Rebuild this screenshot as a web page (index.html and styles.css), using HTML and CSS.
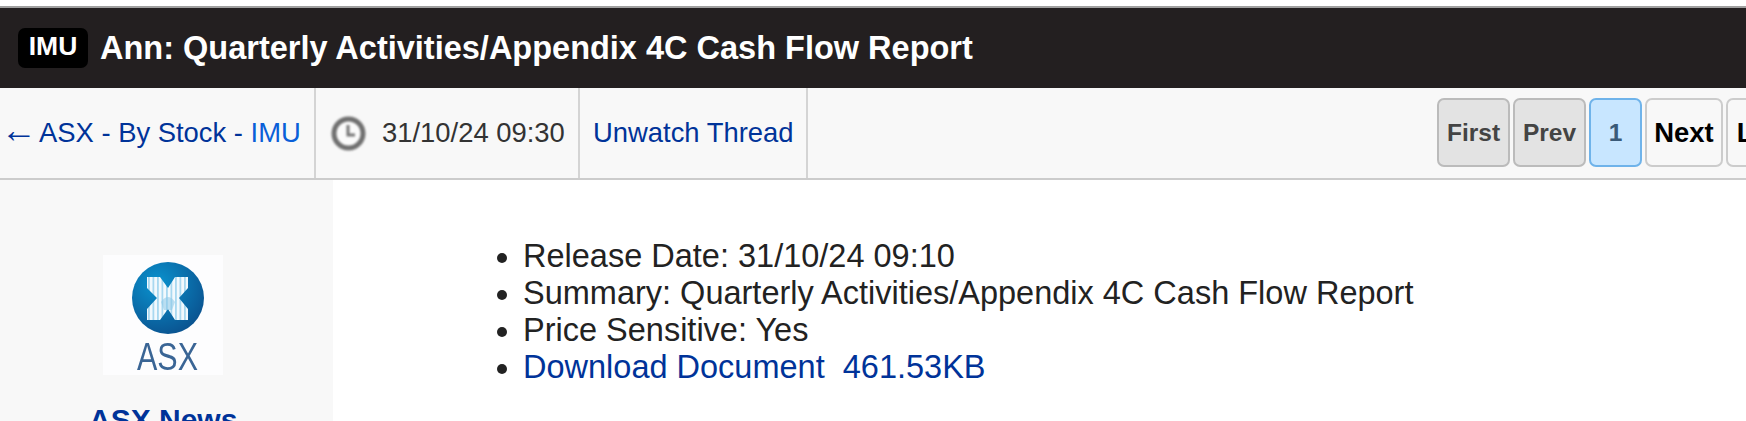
FILE: index.html
```html
<!DOCTYPE html>
<html lang="en">
<head>
<meta charset="utf-8">
<title>Ann: Quarterly Activities/Appendix 4C Cash Flow Report</title>
<link rel="stylesheet" href="styles.css">
</head>
<body>
<header class="title-bar">
  <span class="ticker">IMU</span>
  <h1 class="title">Ann: Quarterly Activities/Appendix 4C Cash Flow Report</h1>
</header>
<nav class="toolbar">
  <div class="cell crumbs"><span><a class="link" href="#"><span class="arrow">←</span>ASX - By Stock - </a><a class="link-bright" href="#">IMU</a></span></div>
  <div class="cell time">
    <svg class="clock" viewBox="0 0 35 35" aria-hidden="true">
      <circle cx="17.5" cy="17.5" r="14.5" fill="#fbfbfb" stroke="#707070" stroke-width="5"/>
      <path d="M17 9v10h7" fill="none" stroke="#767676" stroke-width="3"/>
    </svg>
    <span>31/10/24 09:30</span>
  </div>
  <div class="cell watch"><a class="link" href="#">Unwatch Thread</a></div>
  <div class="pager">
    <a class="page off" href="#">First</a>
    <a class="page off" href="#">Prev</a>
    <a class="page current" href="#">1</a>
    <a class="page on next" href="#">Next</a>
    <a class="page on last" href="#">Last</a>
  </div>
</nav>
<main class="thread">
  <aside class="author">
    <svg class="logo" viewBox="0 0 120 120" role="img" aria-label="ASX">
      <defs>
        <radialGradient id="globe" cx="0.35" cy="0.3" r="0.8">
          <stop offset="0" stop-color="#0a93cf"/>
          <stop offset="1" stop-color="#0a4f8c"/>
        </radialGradient>
        <pattern id="stripes" width="4.5" height="6" patternUnits="userSpaceOnUse">
          <rect width="4.5" height="6" fill="#f2f9fd"/>
          <rect x="0" width="1.8" height="6" fill="#a9d8f0"/>
        </pattern>
      </defs>
      <rect width="120" height="120" fill="#fdfdfe"/>
      <circle cx="65" cy="43" r="36" fill="url(#globe)"/>
      <path d="M44 22h13l8 11 7-11h13v11l-9 10 9 11v11H72l-7-11-8 11H44V54l10-11-10-10z" fill="url(#stripes)"/>
      <path d="M58 47q7-10 14 0l-3 8h-8z" fill="#8cc8e8" opacity="0.55"/>
      <text class="logo-text" x="34" y="115" textLength="61" lengthAdjust="spacingAndGlyphs">ASX</text>
    </svg>
    <a class="author-name" href="#">ASX News</a>
  </aside>
  <section class="post">
    <ul class="facts">
      <li>Release Date: 31/10/24 09:10</li>
      <li>Summary: Quarterly Activities/Appendix 4C Cash Flow Report</li>
      <li>Price Sensitive: Yes</li>
      <li><a class="link" href="#">Download Document&nbsp; 461.53KB</a></li>
    </ul>
  </section>
</main>
</body>
</html>
```
FILE: styles.css
```css
html, body {
  margin: 0;
  height: 100%;
  overflow: hidden;
  background: #fff;
}
body {
  padding-top: 6px;
  box-sizing: border-box;
  font-family: "Liberation Sans", Arial, sans-serif;
  color: #222;
}
a { text-decoration: none; }
.link { color: #039; }
.link-bright { color: #0a5fd8; }

.title-bar {
  display: flex;
  align-items: center;
  gap: 12px;
  height: 80px;
  padding-left: 18px;
  border-top: 2px solid #a0a0a0;
  background: #231f20;
  color: #fff;
}
.ticker {
  width: 70px;
  height: 40px;
  border-radius: 7px;
  background: #000;
  font-size: 26.5px;
  font-weight: 700;
  line-height: 36px;
  text-align: center;
}
.title {
  margin: 0;
  font-size: 32.5px;
  font-weight: 700;
}

.toolbar {
  display: flex;
  align-items: stretch;
  height: 92px;
  box-sizing: border-box;
  border-bottom: 2px solid #ccc;
  background: #f8f8f8;
  font-size: 27.4px;
}
.cell {
  display: flex;
  align-items: center;
  border-right: 2px solid #d4d4d4;
  white-space: nowrap;
}
.crumbs { width: 316px; box-sizing: border-box; padding-left: 1px; }
.arrow { font-size: 36px; line-height: 0; margin-right: 2px; }
.time { width: 264px; box-sizing: border-box; padding-left: 15px; gap: 16px; color: #333; }
.clock { width: 35px; height: 35px; flex: none; filter: blur(0.8px); }
.watch { width: 228px; box-sizing: border-box; padding-left: 13px; }

.pager {
  display: flex;
  align-items: center;
  gap: 3px;
  margin-left: auto;
  margin-right: -58px;
  margin-bottom: 1px;
}
.page {
  display: flex;
  align-items: center;
  justify-content: center;
  height: 69px;
  box-sizing: border-box;
  border: 2px solid #ccc;
  border-radius: 7px;
  font-weight: 700;
  font-size: 24.5px;
}
.off { width: 73px; background: #e3e3e3; border-color: #bbb; color: #444; }
.current { width: 53px; background: #c8e6ff; border-color: #6fb3ea; color: #3a5a78; }
.on { background: #f8f8f8; color: #000; font-size: 27.4px; }
.next { width: 78px; }
.last { width: 78px; }

.thread { display: flex; height: 241px; }
.author {
  flex: none;
  width: 333px;
  box-sizing: border-box;
  display: flex;
  flex-direction: column;
  padding: 75px 0 0 89px;
  background: #f8f8f8;
}
.logo { width: 120px; height: 120px; margin-left: 14px; flex: none; filter: blur(0.6px); }
.logo-text { font-family: "Liberation Sans", Arial, sans-serif; font-size: 39px; fill: #3a6595; }
.author-name {
  margin-top: 28px;
  color: #039;
  font-size: 30px;
  font-weight: 700;
  white-space: nowrap;
}
.post { flex: 1; }
.facts {
  margin: 58px 0 0;
  padding: 0 0 0 190px;
  font-size: 32.5px;
  line-height: 37px;
}
```
